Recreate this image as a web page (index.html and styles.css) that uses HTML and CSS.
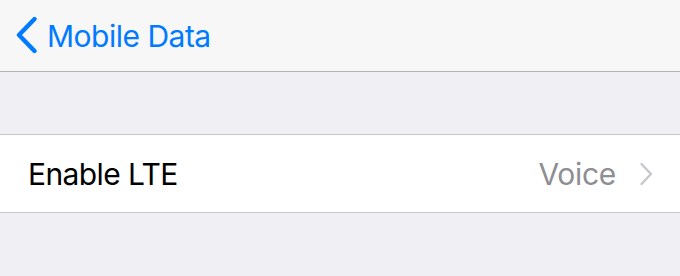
FILE: index.html
```html
<!DOCTYPE html>
<html>
<head>
<meta charset="utf-8">
<link rel="stylesheet" href="styles.css">
</head>
<body>
<div class="screen">
  <header class="nav">
    <a class="back">
      <svg class="back-icon" width="24" height="38" viewBox="0 0 24 38"><path d="M20.5 3 L5 19 L20.5 35" fill="none" stroke="#007aff" stroke-width="4.4" stroke-linecap="round" stroke-linejoin="round"/></svg>
      <span class="back-label">Mobile Data</span>
    </a>
  </header>
  <div class="spacer"></div>
  <div class="group">
    <div class="row">
      <span class="row-title">Enable LTE</span>
      <span class="row-value">Voice</span>
      <svg class="chev" width="16" height="24" viewBox="0 0 16 24"><path d="M3.5 2 L13 12 L3.5 22" fill="none" stroke="#c7c7cc" stroke-width="2.4" stroke-linecap="round" stroke-linejoin="round"/></svg>
    </div>
  </div>
  <div class="rest"></div>
</div>
</body>
</html>
```
FILE: styles.css
```css
html, body { margin: 0; padding: 0; }
body { width: 680px; height: 276px; overflow: hidden; background: #efeff4; font-family: Inter, "Liberation Sans", sans-serif; }
.screen { display: flex; flex-direction: column; }
.nav { height: 71px; background: #f7f7f7; border-bottom: 1px solid #b2b2b2; display: flex; align-items: center; padding-left: 14px; }
.back { display: flex; align-items: center; color: #007aff; gap: 9px; }
.back-icon { display: block; margin-top: -1px; }
.back-label { font-size: 30px; letter-spacing: -0.5px; }
.spacer { height: 62px; }
.group { background: #fff; border-top: 1px solid #c8c7cc; border-bottom: 1px solid #c8c7cc; }
.row { height: 77px; display: flex; align-items: center; padding-left: 28px; padding-right: 26px; }
.row-title { flex: 1; font-size: 30px; color: #000; letter-spacing: -0.6px; }
.row-value { font-size: 30px; color: #8e8e93; letter-spacing: -0.3px; margin-right: 22px; }
.chev { display: block; }
```
